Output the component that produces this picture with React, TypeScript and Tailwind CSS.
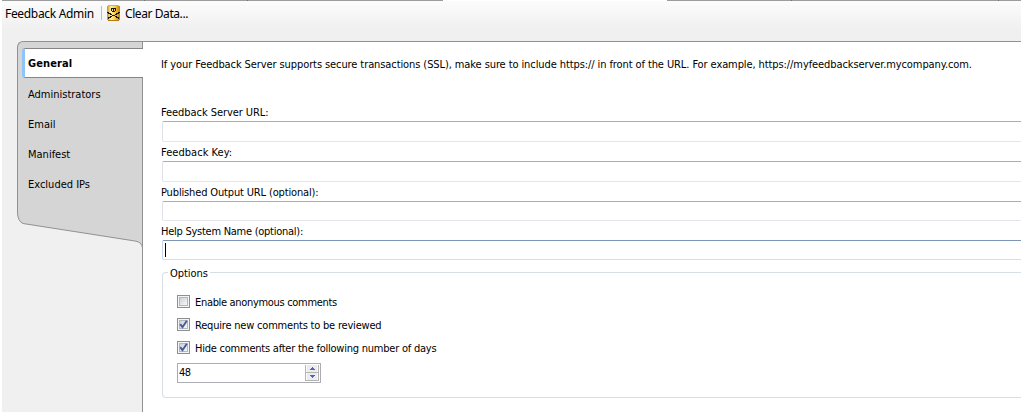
import React from "react";

const uiFont = "font-['DejaVu_Sans_Condensed','DejaVu_Sans',sans-serif] [font-stretch:condensed]";

function SkullIcon() {
  return (
    <svg width="13" height="16" viewBox="0 0 13 16" shapeRendering="crispEdges">
      <defs>
        <linearGradient id="gold" x1="0" x2="1" y1="0" y2="0">
          <stop offset="0" stopColor="#d0900c" />
          <stop offset="0.3" stopColor="#fff0a8" />
          <stop offset="0.6" stopColor="#f9cf50" />
          <stop offset="1" stopColor="#c07c08" />
        </linearGradient>
      </defs>
      <rect x="0" y="1" width="13" height="14" fill="url(#gold)" />
      <rect x="1" y="0" width="11" height="1" fill="#e2b04a" />
      <rect x="1" y="15" width="11" height="1" fill="#b87a10" />
      <path
        fill="#1c1608"
        d="M4 3h5v1h-5zM4 4h1v2h-1zM6 4h1v2h-1zM8 4h1v2h-1zM5 6h3v1h-3zM0 7h2v1h-2zM11 7h2v1h-2zM1 8h3v1h-3zM9 8h3v1h-3zM3 9h2v1h-2zM8 9h2v1h-2zM5 10h3v1h-3zM3 11h2v1h-2zM8 11h2v1h-2zM1 12h3v1h-3zM9 12h3v1h-3zM1 13h1v1h-1zM11 13h1v1h-1z"
      />
    </svg>
  );
}

function Toolbar() {
  return (
    <div className="flex h-[24px] items-center pl-[3px] font-['Noto_Sans','Open_Sans',sans-serif] text-[12px] text-black">
      <span className="w-[96px] whitespace-nowrap pt-[2px] tracking-[-0.32px]">Feedback Admin</span>
      <span className="h-[14px] w-px bg-[#bdbdbd]" />
      <span className="ml-[5px]">
        <SkullIcon />
      </span>
      <span className="ml-[5px] whitespace-nowrap pt-[2px] tracking-[-0.42px]">Clear Data...</span>
    </div>
  );
}

function Sidebar() {
  const items = ["Administrators", "Email", "Manifest", "Excluded IPs"];
  return (
    <nav className={`w-[126px] shrink-0 text-[11px] ${uiFont}`}>
      <div className="h-[171px] rounded-tl-[6px] border-l border-t border-[#919191] bg-[#d5d5d5]">
        <div className="h-[6px] border-r border-[#919191]" />
        <div className="ml-[4px] flex h-[30px] items-center rounded-l-[3px] border-y border-l-[3px] border-y-[#868686] border-l-[#8fc4fa] bg-white pl-[3px] pt-[3px] text-[11px] font-bold tracking-[0.1px]">
          General
        </div>
        <div className="h-[134px] border-r border-[#919191] pl-[10px] pt-[2px]">
          {items.map((t) => (
            <div key={t} className="flex h-[30px] items-center">
              {t}
            </div>
          ))}
        </div>
      </div>
      <svg className="block" width="126" height="36" viewBox="0 0 126 36">
        <path
          d="M.5 0 Q.5 9 6 11.5 L118 29 Q125 30 125.5 36 L125.5 0"
          fill="#d5d5d5"
          stroke="#919191"
        />
      </svg>
      <div className="h-[164px] border-r border-[#919191]" />
    </nav>
  );
}

function Field({
  label,
  tracking,
  short,
  active,
}: {
  label: string;
  tracking: string;
  short?: boolean;
  active?: boolean;
}) {
  return (
    <div>
      <div className={`flex h-[19px] items-center pt-[3px] ${tracking}`}>{label}</div>
      <div
        className={`ml-px flex items-center rounded-l-[2px] border-y border-l bg-white ${short ? "h-[20px]" : "h-[21px]"} ${
          active ? "border-b-[#d3dfea] border-l-[#c3d8ea] border-t-[#7d95b5]" : "border-b-[#e3e5ec] border-l-[#e0e1ea] border-t-[#ababb0]"
        }`}
      >
        {active && <span className="ml-[2px] h-[14px] w-px bg-black" />}
      </div>
    </div>
  );
}

function Check({ label, tracking, checked }: { label: string; tracking: string; checked?: boolean }) {
  return (
    <div className="flex h-[23px] items-center">
      <span className="flex size-[13px] items-center justify-center border border-[#8e8f8f] bg-[#f4f4f4]">
        <span className="flex size-[9px] items-center justify-center border border-[#b4b8bd] bg-linear-to-br from-[#cdd2d8] to-[#f6f6f6]">
          {checked && (
            <svg className="shrink-0" width="9" height="9" viewBox="0 0 9 9">
              <path d="M1.2 4.2 L3.5 7.2 L7.8 .8" fill="none" stroke="#435b9b" strokeWidth="1.9" />
            </svg>
          )}
        </span>
      </span>
      <span className={`ml-[5px] whitespace-nowrap pt-[3px] ${tracking}`}>{label}</span>
    </div>
  );
}

function SpinButton({ down }: { down?: boolean }) {
  return (
    <span className="flex h-[7px] items-center justify-center border-x border-[#fafafa] bg-[#ececee]">
      <svg width="5" height="3" viewBox="0 0 5 3" shapeRendering="crispEdges">
        <path d={down ? "M0 0h5v1h-1v1h-1v1h-1v-1h-1v-1h-1z" : "M0 3h5v-1h-1v-1h-1v-1h-1v1h-1v1h-1z"} fill="#4a66c0" />
      </svg>
    </span>
  );
}

function Options() {
  return (
    <section className="ml-px mt-[5px]">
      <div className="flex h-[16px] items-center">
        <span className="mb-px h-[8px] w-[6px] self-end rounded-tl-[4px] border-l border-t border-[#d5dfe5]" />
        <span className="mx-[2px] pt-[2px] tracking-[-0.05px]">Options</span>
        <span className="mb-px h-[8px] flex-1 self-end border-t border-[#d5dfe5]" />
      </div>
      <div className="-mt-px h-[118px] rounded-bl-[4px] border-b border-l border-[#d5dfe5] pl-[14px] pt-[10px]">
        <Check label="Enable anonymous comments" tracking="tracking-[-0.32px]" />
        <Check label="Require new comments to be reviewed" tracking="tracking-[-0.2px]" checked />
        <Check label="Hide comments after the following number of days" tracking="tracking-[-0.23px]" checked />
        <div className="mt-[4px] flex h-[20px] w-[144px] justify-between border border-[#abadb3]">
          <span className="flex h-[18px] items-center pl-px tracking-[-0.6px]">48</span>
          <span className="mb-px mr-px mt-px flex w-[14px] flex-col justify-between border border-t-0 border-[#b5b5b5] bg-[#b5b5b5]">
            <SpinButton />
            <SpinButton down />
          </span>
        </div>
      </div>
    </section>
  );
}

export default function App() {
  return (
    <div className="flex h-[412px] w-[1021px] flex-col overflow-hidden bg-white pl-[2px] text-black">
      <div className="flex h-px">
        <span className="w-[142px] bg-[#9c9c9c]" />
        <span className="w-px bg-[#707070]" />
        <span className="w-[102px] bg-[#9c9c9c]" />
        <span className="w-px bg-[#707070]" />
        <span className="w-[195px] bg-[#9c9c9c]" />
        <span className="w-[224px] bg-white" />
        <span className="w-[124px] bg-[#9c9c9c]" />
        <span className="w-px bg-[#707070]" />
        <span className="w-[206px] bg-[#9c9c9c]" />
        <span className="w-px bg-[#707070]" />
        <span className="flex-1 bg-[#9c9c9c]" />
      </div>
      <div className="h-[411px] bg-[linear-gradient(to_bottom,#fcfcfc_0px,#f0f0f0_28px)]">
        <Toolbar />
        <div className="mt-[16px] flex h-[371px] pl-[15px]">
          <Sidebar />
          <main className={`flex-1 border-t border-[#919191] bg-white pl-[18px] text-[11px] ${uiFont}`}>
            <p className="flex h-[44px] items-center whitespace-nowrap pt-[2px] tracking-[-0.092px]">
              If your Feedback Server supports secure transactions (SSL), make sure to include https:// in front of the URL. For example, https://myfeedbackserver.mycompany.com.
            </p>
            <div className="pt-[16px]">
              <Field label="Feedback Server URL:" tracking="tracking-[-0.06px]" />
              <Field label="Feedback Key:" tracking="tracking-[0.04px]" />
              <Field label="Published Output URL (optional):" tracking="tracking-[-0.15px]" short />
              <Field label="Help System Name (optional):" tracking="tracking-[-0.26px]" short active />
            </div>
            <Options />
          </main>
        </div>
      </div>
    </div>
  );
}
